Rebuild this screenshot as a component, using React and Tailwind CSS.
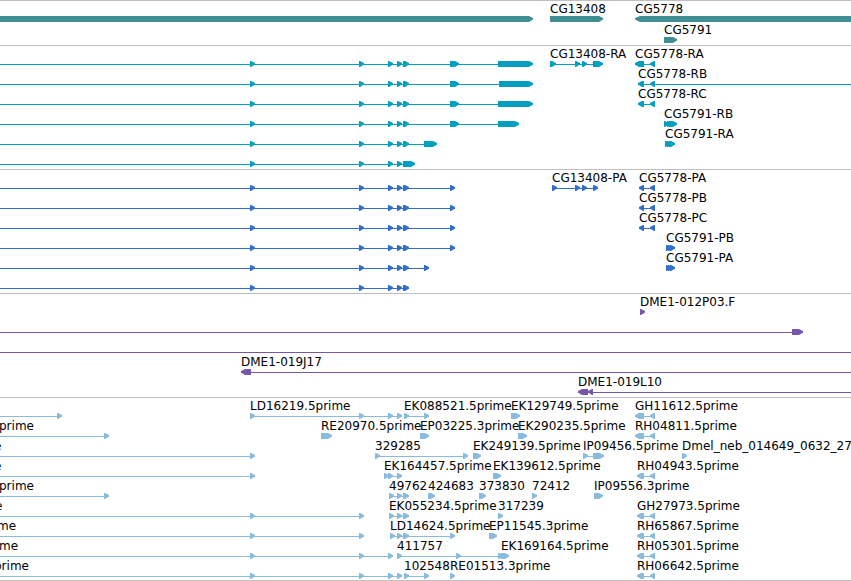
const HEAD = 5;

// A feature is { label, at, dir, parts, from, to }:
// parts are the exons, from/to stretch the thin line past them.
const r = (label, parts, more) => ({ label, parts, dir: 'right', ...more });
const l = (label, parts, more) => ({ label, parts, dir: 'left', ...more });

const A = [250, 255];
const B = [359, 364];
const C = [388, 393];
const D = [397, 402];
const E = [403, 409];
const F = [404, 409];
const G = [650, 655];

const fromEdge = { from: 0 };

const tracks = [
  {
    name: 'Genes',
    color: 'text-[#3e8e93]',
    rowClass: 'h-[21px]',
    padClass: 'pb-0.5',
    rows: [
      [
        r('', [[0, 533]]),
        r('CG13408', [[550, 603]]),
        l('CG5778', [[635, null]]),
      ],
      [r('CG5791', [[664, 677]])],
    ],
  },
  {
    name: 'Transcripts',
    color: 'text-[#009fc0]',
    rowClass: 'h-5',
    padClass: 'pb-[3px]',
    rows: [
      [
        r('', [A, B, C, D, E, [450, 459], [498, 533]], fromEdge),
        r('CG13408-RA', [[550, 556], [575, 580], [582, 587], [593, 603]]),
        l('CG5778-RA', [[635, 644], G]),
      ],
      [
        r('', [A, B, C, D, E, [450, 459], [499, 533]], fromEdge),
        l('CG5778-RB', [[638, 644], G], { to: '100%' }),
      ],
      [
        r('', [A, B, C, D, E, [450, 459], [498, 533]], fromEdge),
        l('CG5778-RC', [[638, 644], G]),
      ],
      [
        r('', [A, B, C, D, E, [450, 459], [498, 519]], fromEdge),
        r('CG5791-RB', [[664, 668], [667, 671], [669, 677]]),
      ],
      [
        r('', [A, B, C, D, E, [424, 437]], fromEdge),
        r('CG5791-RA', [[665, 669], [667, 671], [669, 675]]),
      ],
      [r('', [A, B, C, D, [403, 415]], fromEdge)],
    ],
  },
  {
    name: 'Proteins',
    color: 'text-[#316fcf]',
    rowClass: 'h-5',
    padClass: 'pb-[3px]',
    rows: [
      [
        r('', [A, B, C, D, E, [450, 455]], fromEdge),
        r('CG13408-PA', [[552, 557], [575, 580], [582, 587], [593, 598]]),
        l('CG5778-PA', [[639, 644], G]),
      ],
      [
        r('', [A, B, C, D, E, [450, 455]], fromEdge),
        l('CG5778-PB', [[639, 644], G]),
      ],
      [
        r('', [A, B, C, D, E, [450, 455]], fromEdge),
        l('CG5778-PC', [[639, 644], G]),
      ],
      [
        r('', [A, B, C, D, E, [450, 455]], fromEdge),
        r('CG5791-PB', [[666, 670], [668, 672], [670, 675]]),
      ],
      [
        r('', [A, B, C, D, E, [424, 429]], fromEdge),
        r('CG5791-PA', [[666, 670], [668, 672], [670, 675]]),
      ],
      [r('', [A, B, C, D, E], fromEdge)],
    ],
  },
  {
    name: 'Clones',
    color: 'text-[#7758a8]',
    rowClass: 'h-5',
    padClass: 'pb-[3px]',
    rows: [
      [r('DME1-012P03.F', [[640, 645]])],
      [r('', [[792, 803]], fromEdge)],
      [r('', [], { from: 0, to: '100%' })],
      [l('DME1-019J17', [[241, 251]], { to: '100%' })],
      [l('DME1-019L10', [[578, 588], [588, 593]], { to: '100%' })],
    ],
  },
  {
    name: 'ESTs',
    color: 'text-[#88bbdd]',
    rowClass: 'h-5',
    padClass: 'pb-0.5',
    rows: [
      [
        r('', [[57, 62]], fromEdge),
        r('LD16219.5prime', [A, B, C, D]),
        r('EK088521.5prime', [F, [424, 429]]),
        r('EK129749.5prime', [[511, 520]]),
        l('GH11612.5prime', [[635, 644], G]),
      ],
      [
        r('prime', [[104, 109]], { from: 0, at: -1 }),
        r('RE20970.5prime', [[321, 332]]),
        r('EP03225.3prime', [[420, 429]]),
        r('EK290235.5prime', [[518, 527]]),
        l('RH04811.5prime', [[635, 644], G]),
      ],
      [
        r('e', [A], { from: 0, at: -6 }),
        r('329285', [[375, 380], [463, 468]]),
        r('EK249139.5prime', [[473, 481]]),
        r('IP09456.5prime', [[583, 588], [593, 604]]),
        r('Dmel_neb_014649_0632_27', [[682, 687]]),
      ],
      [
        r('e', [A], { from: 0, at: -6 }),
        r('EK164457.5prime', [[384, 389], C, D]),
        r('EK139612.5prime', [[493, 501]]),
        l('RH04943.5prime', [[637, 644], G]),
      ],
      [
        r('prime', [[104, 109]], { from: 0, at: -1 }),
        r('49762', [[389, 394], D, E]),
        r('424683', [[428, 435]]),
        r('373830', [[479, 486]]),
        r('72412', [[532, 537]]),
        r('IP09556.3prime', [[594, 603]]),
      ],
      [
        r('e', [A, B], { from: 0, at: -5 }),
        r('EK055234.5prime', [[389, 394], D, E]),
        r('317239', [[498, 503]]),
        l('GH27973.5prime', [[637, 644], G]),
      ],
      [
        r('me', [A, B], { from: 0, at: -3 }),
        r('LD14624.5prime', [[390, 395], D, E, [450, 455]]),
        r('EP11545.3prime', [[489, 497]]),
        l('RH65867.5prime', [[637, 644], G]),
      ],
      [
        r('me', [A, B, C], { from: 0, at: -1 }),
        r('411757', [D, [456, 461], [498, 503]]),
        r('EK169164.5prime', [[501, 509]]),
        l('RH05301.5prime', [[637, 644], G]),
      ],
      [
        r('prime', [A, B, C, D], { from: 0, at: -6 }),
        r('102548', [F, [424, 429]]),
        r('RE01513.3prime', [[450, 455]]),
        l('RH06642.5prime', [[637, 644], G]),
      ],
    ],
  },
];

function Exon({ start, end, dir }) {
  // no end: the block runs on past the right edge
  if (end === null) {
    return (
      <>
        <path d={`M${start} 17V18.6L${start + HEAD} 21V15Z`} />
        <rect x={start + HEAD} y="15" width="100%" height="6" />
      </>
    );
  }

  const head = Math.min(HEAD, end - start);
  if (dir === 'left') {
    return (
      <path d={`M${start} 17L${start + head - 1} 15H${end}V21H${start + head - 1}L${start} 18.6Z`} />
    );
  }
  return (
    <path d={`M${start} 15H${end - head + 1}L${end} 17V18.6L${end - head + 1} 21H${start}Z`} />
  );
}

function Feature({ feature }) {
  const { parts, dir } = feature;
  const from = feature.from ?? parts[0][0];
  const to = feature.to ?? parts[parts.length - 1][1];
  const hasLine = parts.length !== 1 || feature.from !== undefined || feature.to !== undefined;

  return (
    <g>
      {hasLine && (
        <line x1={from} y1="18.5" x2={to} y2="18.5" stroke="currentColor" strokeWidth="1" />
      )}
      {parts.map(([start, end]) => (
        <Exon key={start} start={start} end={end} dir={dir} />
      ))}
    </g>
  );
}

function Row({ features, color, rowClass }) {
  return (
    <div className={`relative ${rowClass}`}>
      <svg
        className={`block h-full w-full overflow-visible ${color}`}
        fill="currentColor"
        aria-hidden="true"
      >
        {features.map((feature, i) => (
          <Feature key={i} feature={feature} />
        ))}
      </svg>
      {features
        .filter((feature) => feature.label)
        .map((feature) => (
          <span
            key={feature.label}
            className="absolute top-0 whitespace-nowrap"
            style={{ left: feature.at ?? feature.parts[0][0] }}
          >
            {feature.label}
          </span>
        ))}
    </div>
  );
}

export default function App() {
  return (
    <main className="overflow-hidden border-b border-[#bfbfbf] bg-white font-['DejaVu_Sans',sans-serif] text-xs leading-4 text-black">
      {tracks.map((track) => (
        <section
          key={track.name}
          aria-label={track.name}
          className={`border-t border-[#bfbfbf] ${track.padClass}`}
        >
          {track.rows.map((features, i) => (
            <Row key={i} features={features} color={track.color} rowClass={track.rowClass} />
          ))}
        </section>
      ))}
    </main>
  );
}
